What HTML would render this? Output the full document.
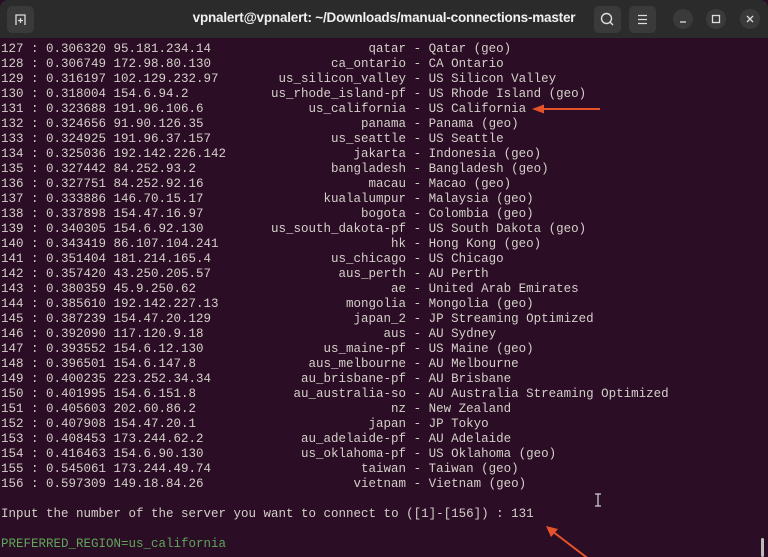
<!DOCTYPE html>
<html><head><meta charset="utf-8"><style>
html,body{margin:0;padding:0;width:768px;height:557px;overflow:hidden;background:#2c0d26;}
.tb{position:absolute;left:0;top:0;width:768px;height:38px;background:#2b2b2b;border-radius:8px 8px 0 0;}
.title{position:absolute;left:0;width:768px;top:10px;text-align:center;color:#f0f0f0;font:bold 13.5px "Liberation Sans",sans-serif;letter-spacing:-0.2px;}
.btn{position:absolute;top:6px;width:27px;height:27px;background:#3a3a3a;border-radius:5px;}
.circ{position:absolute;top:9px;width:20px;height:20px;border-radius:50%;background:#3a3a3a;}
.term{position:absolute;left:1px;top:42px;font:12.5px/15px "Liberation Mono",monospace;color:#d3d0c8;}
.term div{white-space:pre;height:15px;}
.r{display:inline-flex;width:54ch;justify-content:space-between;}
.g{color:#5fa55a;}
</style></head><body>
<div class="tb">
<div class="btn" style="left:7px"><svg width="27" height="27"><path d="M9 19V9h9v10" fill="none" stroke="#ddd" stroke-width="1.3"/><path d="M13.5 12v5M11 14.5h5" stroke="#ddd" stroke-width="1.3"/></svg></div>
<div class="title">vpnalert@vpnalert: ~/Downloads/manual-connections-master</div>
<div class="btn" style="left:594px"><svg width="27" height="27"><circle cx="12.5" cy="12.5" r="5" fill="none" stroke="#ddd" stroke-width="1.4"/><path d="M16 16l3 3" stroke="#ddd" stroke-width="1.4"/></svg></div>
<div class="btn" style="left:629px"><svg width="27" height="27"><path d="M9 9.5h9M9 13.5h9M9 17.5h9" stroke="#ddd" stroke-width="1.3"/></svg></div>
<div class="circ" style="left:673px"><svg width="20" height="20"><path d="M7 13h6" stroke="#ddd" stroke-width="1.3"/></svg></div>
<div class="circ" style="left:706px"><svg width="20" height="20"><rect x="6.5" y="6.5" width="7" height="7" fill="none" stroke="#ddd" stroke-width="1.3"/></svg></div>
<div class="circ" style="left:740px"><svg width="20" height="20"><path d="M7 7l6 6M13 7l-6 6" stroke="#ddd" stroke-width="1.3"/></svg></div>
</div>
<div class="term">
<div><span class="r"><span>127 : 0.306320 95.181.234.14</span><span>qatar</span></span> - Qatar (geo)</div>
<div><span class="r"><span>128 : 0.306749 172.98.80.130</span><span>ca_ontario</span></span> - CA Ontario</div>
<div><span class="r"><span>129 : 0.316197 102.129.232.97</span><span>us_silicon_valley</span></span> - US Silicon Valley</div>
<div><span class="r"><span>130 : 0.318004 154.6.94.2</span><span>us_rhode_island-pf</span></span> - US Rhode Island (geo)</div>
<div><span class="r"><span>131 : 0.323688 191.96.106.6</span><span>us_california</span></span> - US California</div>
<div><span class="r"><span>132 : 0.324656 91.90.126.35</span><span>panama</span></span> - Panama (geo)</div>
<div><span class="r"><span>133 : 0.324925 191.96.37.157</span><span>us_seattle</span></span> - US Seattle</div>
<div><span class="r"><span>134 : 0.325036 192.142.226.142</span><span>jakarta</span></span> - Indonesia (geo)</div>
<div><span class="r"><span>135 : 0.327442 84.252.93.2</span><span>bangladesh</span></span> - Bangladesh (geo)</div>
<div><span class="r"><span>136 : 0.327751 84.252.92.16</span><span>macau</span></span> - Macao (geo)</div>
<div><span class="r"><span>137 : 0.333886 146.70.15.17</span><span>kualalumpur</span></span> - Malaysia (geo)</div>
<div><span class="r"><span>138 : 0.337898 154.47.16.97</span><span>bogota</span></span> - Colombia (geo)</div>
<div><span class="r"><span>139 : 0.340305 154.6.92.130</span><span>us_south_dakota-pf</span></span> - US South Dakota (geo)</div>
<div><span class="r"><span>140 : 0.343419 86.107.104.241</span><span>hk</span></span> - Hong Kong (geo)</div>
<div><span class="r"><span>141 : 0.351404 181.214.165.4</span><span>us_chicago</span></span> - US Chicago</div>
<div><span class="r"><span>142 : 0.357420 43.250.205.57</span><span>aus_perth</span></span> - AU Perth</div>
<div><span class="r"><span>143 : 0.380359 45.9.250.62</span><span>ae</span></span> - United Arab Emirates</div>
<div><span class="r"><span>144 : 0.385610 192.142.227.13</span><span>mongolia</span></span> - Mongolia (geo)</div>
<div><span class="r"><span>145 : 0.387239 154.47.20.129</span><span>japan_2</span></span> - JP Streaming Optimized</div>
<div><span class="r"><span>146 : 0.392090 117.120.9.18</span><span>aus</span></span> - AU Sydney</div>
<div><span class="r"><span>147 : 0.393552 154.6.12.130</span><span>us_maine-pf</span></span> - US Maine (geo)</div>
<div><span class="r"><span>148 : 0.396501 154.6.147.8</span><span>aus_melbourne</span></span> - AU Melbourne</div>
<div><span class="r"><span>149 : 0.400235 223.252.34.34</span><span>au_brisbane-pf</span></span> - AU Brisbane</div>
<div><span class="r"><span>150 : 0.401995 154.6.151.8</span><span>au_australia-so</span></span> - AU Australia Streaming Optimized</div>
<div><span class="r"><span>151 : 0.405603 202.60.86.2</span><span>nz</span></span> - New Zealand</div>
<div><span class="r"><span>152 : 0.407908 154.47.20.1</span><span>japan</span></span> - JP Tokyo</div>
<div><span class="r"><span>153 : 0.408453 173.244.62.2</span><span>au_adelaide-pf</span></span> - AU Adelaide</div>
<div><span class="r"><span>154 : 0.416463 154.6.90.130</span><span>us_oklahoma-pf</span></span> - US Oklahoma (geo)</div>
<div><span class="r"><span>155 : 0.545061 173.244.49.74</span><span>taiwan</span></span> - Taiwan (geo)</div>
<div><span class="r"><span>156 : 0.597309 149.18.84.26</span><span>vietnam</span></span> - Vietnam (geo)</div>
<div> </div>
<div>Input the number of the server you want to connect to ([1]-[156]) : 131</div>
<div> </div>
<div class="g">PREFERRED_REGION=us_california</div>
</div>
<svg style="position:absolute;left:0;top:0" width="768" height="557">
<path d="M542 109H600" stroke="#e4532a" stroke-width="2"/>
<path d="M532 109L544 104.5L544 113.5Z" fill="#e4532a"/>
<path d="M590 560L552 531" stroke="#e4532a" stroke-width="2"/>
<path d="M546 526L558 529L551 537Z" fill="#e4532a"/>
<path d="M595 494h6M595 506h6M598 494v12" stroke="#ccc" stroke-width="1.3"/>
<rect x="761" y="538" width="3" height="19" rx="1.5" fill="#bbb"/>
</svg>
</body></html>
